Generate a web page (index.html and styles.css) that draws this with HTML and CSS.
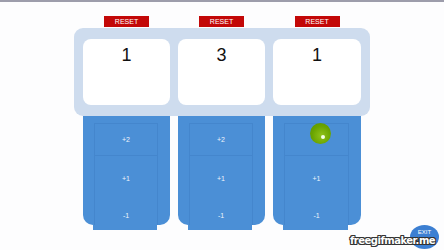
FILE: index.html
```html
<!DOCTYPE html>
<html>
<head>
<meta charset="utf-8">
<link rel="stylesheet" href="styles.css">
</head>
<body>
<div class="topbar"></div>
<div class="stage">
  <div class="resets">
    <div class="slot"><button class="reset">RESET</button></div>
    <div class="slot"><button class="reset">RESET</button></div>
    <div class="slot"><button class="reset">RESET</button></div>
  </div>
  <div class="board">
    <div class="card">1</div>
    <div class="card">3</div>
    <div class="card">1</div>
  </div>
  <div class="panels">
    <div class="panel">
      <div class="body">
        <div class="inner">
          <div class="row r1">+2</div>
          <div class="row r2">+1</div>
          <div class="row r3">-1</div>
        </div>
      </div>
      <div class="foot"></div>
    </div>
    <div class="panel">
      <div class="body">
        <div class="inner">
          <div class="row r1">+2</div>
          <div class="row r2">+1</div>
          <div class="row r3">-1</div>
        </div>
      </div>
      <div class="foot"></div>
    </div>
    <div class="panel">
      <div class="body">
        <div class="inner">
          <div class="row r1">+2</div>
          <div class="row r2">+1</div>
          <div class="row r3">-1</div>
        </div>
      </div>
      <div class="foot"></div>
      <div class="cursor"><span class="dot"></span></div>
    </div>
  </div>
</div>
<div class="exit">EXIT</div>
<div class="watermark">freegifmaker.me</div>
</body>
</html>
```
FILE: styles.css
```css
html, body {
  margin: 0;
  padding: 0;
  background: #fdfdfe;
  width: 444px;
  height: 250px;
  overflow: hidden;
  font-family: "Liberation Sans", Arial, sans-serif;
  position: relative;
}
.topbar {
  height: 2px;
  background: #9d9dab;
}
.stage {
  margin-left: 74px;
  width: 296px;
  padding-top: 14px;
}
.resets {
  display: grid;
  grid-template-columns: 87px 87px 88px;
  column-gap: 8px;
  padding: 0 9px;
  height: 11px;
  margin-bottom: 1px;
}
.slot {
  display: flex;
  justify-content: center;
}
.reset {
  width: 45px;
  height: 11px;
  border: 0;
  padding: 0;
  margin: 0;
  background: #c30808;
  color: #fff;
  font-family: "Liberation Sans", Arial, sans-serif;
  font-size: 7px;
  line-height: 11px;
}
.board {
  display: grid;
  grid-template-columns: 87px 87px 88px;
  column-gap: 8px;
  padding: 11px 9px;
  background: #cedcee;
  border-radius: 9px;
  height: 66px;
}
.card {
  background: #fff;
  border-radius: 8px;
  text-align: center;
  font-size: 18px;
  line-height: 20px;
  padding-top: 6px;
  color: #111;
}
.panels {
  display: grid;
  grid-template-columns: 87px 87px 88px;
  column-gap: 8px;
  padding: 0 9px;
}
.panel {
  position: relative;
}
.body {
  height: 109px;
  background: #4b8fd6;
  border-radius: 0 0 10px 10px;
  padding: 7px 12px 0 11px;
  box-sizing: border-box;
}
.inner {
  border: 1px solid #4486cd;
  border-bottom: 0;
  height: 102px;
  box-sizing: border-box;
}
.row {
  color: #eef4fb;
  font-size: 7px;
  text-align: center;
  display: flex;
  align-items: center;
  justify-content: center;
}
.r1 { height: 31px; border-bottom: 1px solid #4486cd; }
.r2 { height: 44px; }
.r3 { height: 28px; padding-top: 3px; box-sizing: border-box; }
.foot {
  height: 5px;
  margin: 0 13px 0 10px;
  background: #4b8fd6;
}
.cursor {
  position: absolute;
  left: 37px;
  top: 7px;
  width: 21px;
  height: 21px;
  border-radius: 50%;
  background: radial-gradient(circle at 55% 60%, #8fc21a 0%, #6aa400 55%, #5a9300 100%);
}
.dot {
  position: absolute;
  left: 11px;
  top: 12px;
  width: 4px;
  height: 4px;
  border-radius: 50%;
  background: #f4ffe6;
}
.exit {
  position: absolute;
  left: 410px;
  top: 225px;
  width: 29px;
  height: 24px;
  border-radius: 50%;
  background: #3c7fd2;
  color: #fff;
  font-size: 6px;
  text-align: center;
  line-height: 14px;
}
.watermark {
  position: absolute;
  left: 350px;
  top: 235px;
  font-family: "DejaVu Sans", Verdana, sans-serif;
  font-weight: bold;
  font-size: 10px;
  letter-spacing: -0.5px;
  color: #fff;
  text-shadow: -1px -1px 0 #333, 1px -1px 0 #333, -1px 1px 0 #333, 1px 1px 0 #333, 0 1px 0 #333, 0 -1px 0 #333, 1px 0 0 #333, -1px 0 0 #333;
}
```
